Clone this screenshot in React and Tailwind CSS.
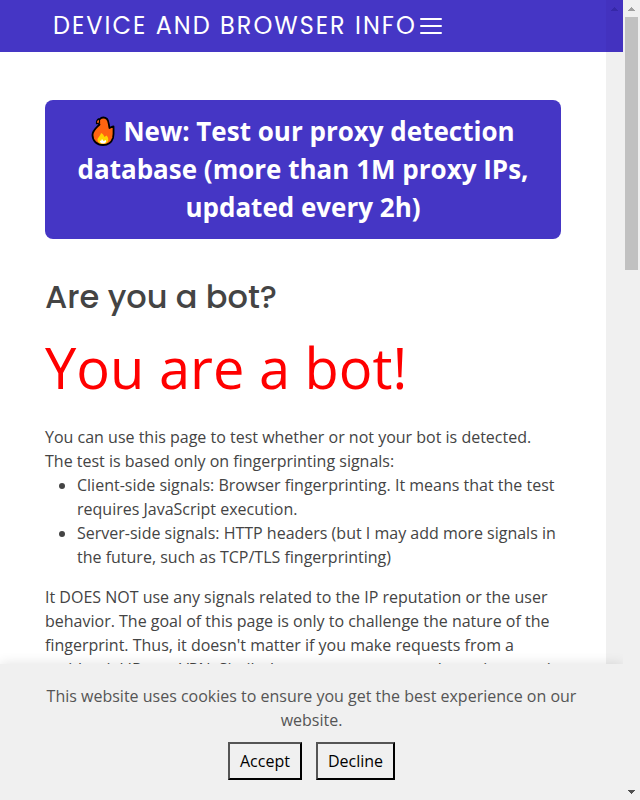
function Arrow({ down = false, className }) {
  return (
    <svg viewBox="0 0 17 17" className={"h-[17px] w-[17px] " + className} aria-hidden="true" shapeRendering="crispEdges">
      <path d={down ? "M5 7h7v1h-1v1h-1v1h-1v1h-1v-1h-1v-1h-1v-1h-1z" : "M8 7h1v1h1v1h1v1h1v1h-7v-1h1v-1h1v-1h1z"} fill="currentColor" />
    </svg>
  );
}

function Flame() {
  return (
    <svg viewBox="0 0 24 30" className="mr-2 inline-block h-[30px] w-6 align-[-5px]" role="img" aria-label="fire">
      <path d="M8.5 8.5C5.5 7 6 3 9 3C10.5 1 14 1 16 3C18 5 17.5 8 18.5 12C20 11.500 21 10.500 22.500 10.500C22.500 14 23 18 22 22C20.500 26.500 17 29 12 29C6 29 1.500 25 1.500 19C1.500 14.500 5 12 8.500 8.500Z" fill="#ff6410" stroke="#000" strokeWidth="1.800" strokeLinejoin="round" />
      <path d="M5.500 7.500C5 4.500 7 3 8.500 3.500L8.500 7Z" fill="#ff6410" stroke="#000" strokeWidth="1.200" />
      <path d="M10 17C12 18 13 19.500 13.500 21L15.500 19.500C18 22 18 26 14.500 27.500C11 28.500 7 27.500 6.500 24C6.500 21.500 9.500 20 10 17Z" fill="#ffd500" />
      <path d="M11 23L12.500 25L15 24C15.500 26 14.500 27.500 12 27.500C9.500 27.500 8.500 26 9 24.500L10 25Z" fill="#fff" />
    </svg>
  );
}

export default function App() {
  return (
    <div className="flex h-screen overflow-hidden bg-white font-['Open_Sans',sans-serif] text-base text-[#444]">
      <div className="relative flex min-w-0 flex-1 overflow-hidden">
        <main className="min-w-0 flex-1 overflow-hidden px-[45px] pt-[100px]">
          <a href="#proxy" className="block rounded-lg bg-[#4536c5] px-6 pt-3 pb-[13px] text-center text-[26px] leading-[38px] font-bold text-white">
            <Flame />
            New: Test our proxy detection database (more than 1M proxy IPs, updated every 2h)
          </a>
          <h1 className="mt-10 font-['Poppins','Inter',sans-serif] text-[32px] leading-9 font-medium">Are you a bot?</h1>
          <p className="mt-[10px] text-[56px] leading-[84px] text-[#f00]">You are a bot!</p>
          <p className="mt-4">
            You can use this page to test whether or not your bot is detected.
            <br />
            The test is based only on fingerprinting signals:
          </p>
          <ul className="mb-4 list-disc pl-8">
            <li>Client-side signals: Browser fingerprinting. It means that the test requires JavaScript execution.</li>
            <li>Server-side signals: HTTP headers (but I may add more signals in the future, such as TCP/TLS fingerprinting)</li>
          </ul>
          <p>
            It DOES NOT use any signals related to the IP reputation or the user behavior. The goal of this page is only to challenge the nature of the fingerprint. Thus, it doesn't matter if you make requests from a residential IP or a VPN. Similarly, we can use mouse dynamics even in
          </p>
        </main>
        <div className="w-[17px] shrink-0 bg-[#f0f0f0]" />

        <header className="absolute inset-x-0 top-0 flex h-[52px] items-center bg-[#4536c5] pl-[53px] text-white">
          <a href="#home" className="font-['Poppins','Inter',sans-serif] text-2xl tracking-[2px] whitespace-nowrap">DEVICE AND BROWSER INFO</a>
          <button type="button" aria-label="Menu" className="ml-[3px]">
            <svg viewBox="0 0 22 20" className="h-5 w-[22px]" fill="none" stroke="currentColor" strokeWidth="2" strokeLinecap="round">
              <path d="M1 3h20M1 10h20M1 17h20" />
            </svg>
          </button>
          <div className="ml-auto h-full w-[17px] shrink-0 bg-[#4332bf]">
            <Arrow className="text-[#3628a8]" />
          </div>
        </header>

        <section aria-label="Cookie consent" className="absolute inset-x-0 bottom-0 bg-[#f0f0f0] px-8 py-5 text-center text-[#555] shadow-[0_0_12px_rgba(0,0,0,0.12)]">
          <p>This website uses cookies to ensure you get the best experience on our website.</p>
          <div className="mt-[10px] flex justify-center gap-[14px] text-black">
            <button type="button" className="border-2 border-t-[#555] border-r-black border-b-black border-l-[#555] px-[10px] py-[5px]">Accept</button>
            <button type="button" className="border-2 border-t-[#555] border-r-black border-b-black border-l-[#555] px-[10px] py-[5px]">Decline</button>
          </div>
        </section>
      </div>
      <div className="flex w-[17px] shrink-0 flex-col bg-[#f0f0f0]">
        <Arrow className="text-[#a0a0a0]" />
        <div className="mx-[2px] h-[253px] bg-[#c1c1c1]" />
        <Arrow down className="mt-auto text-[#505050]" />
      </div>
    </div>
  );
}
